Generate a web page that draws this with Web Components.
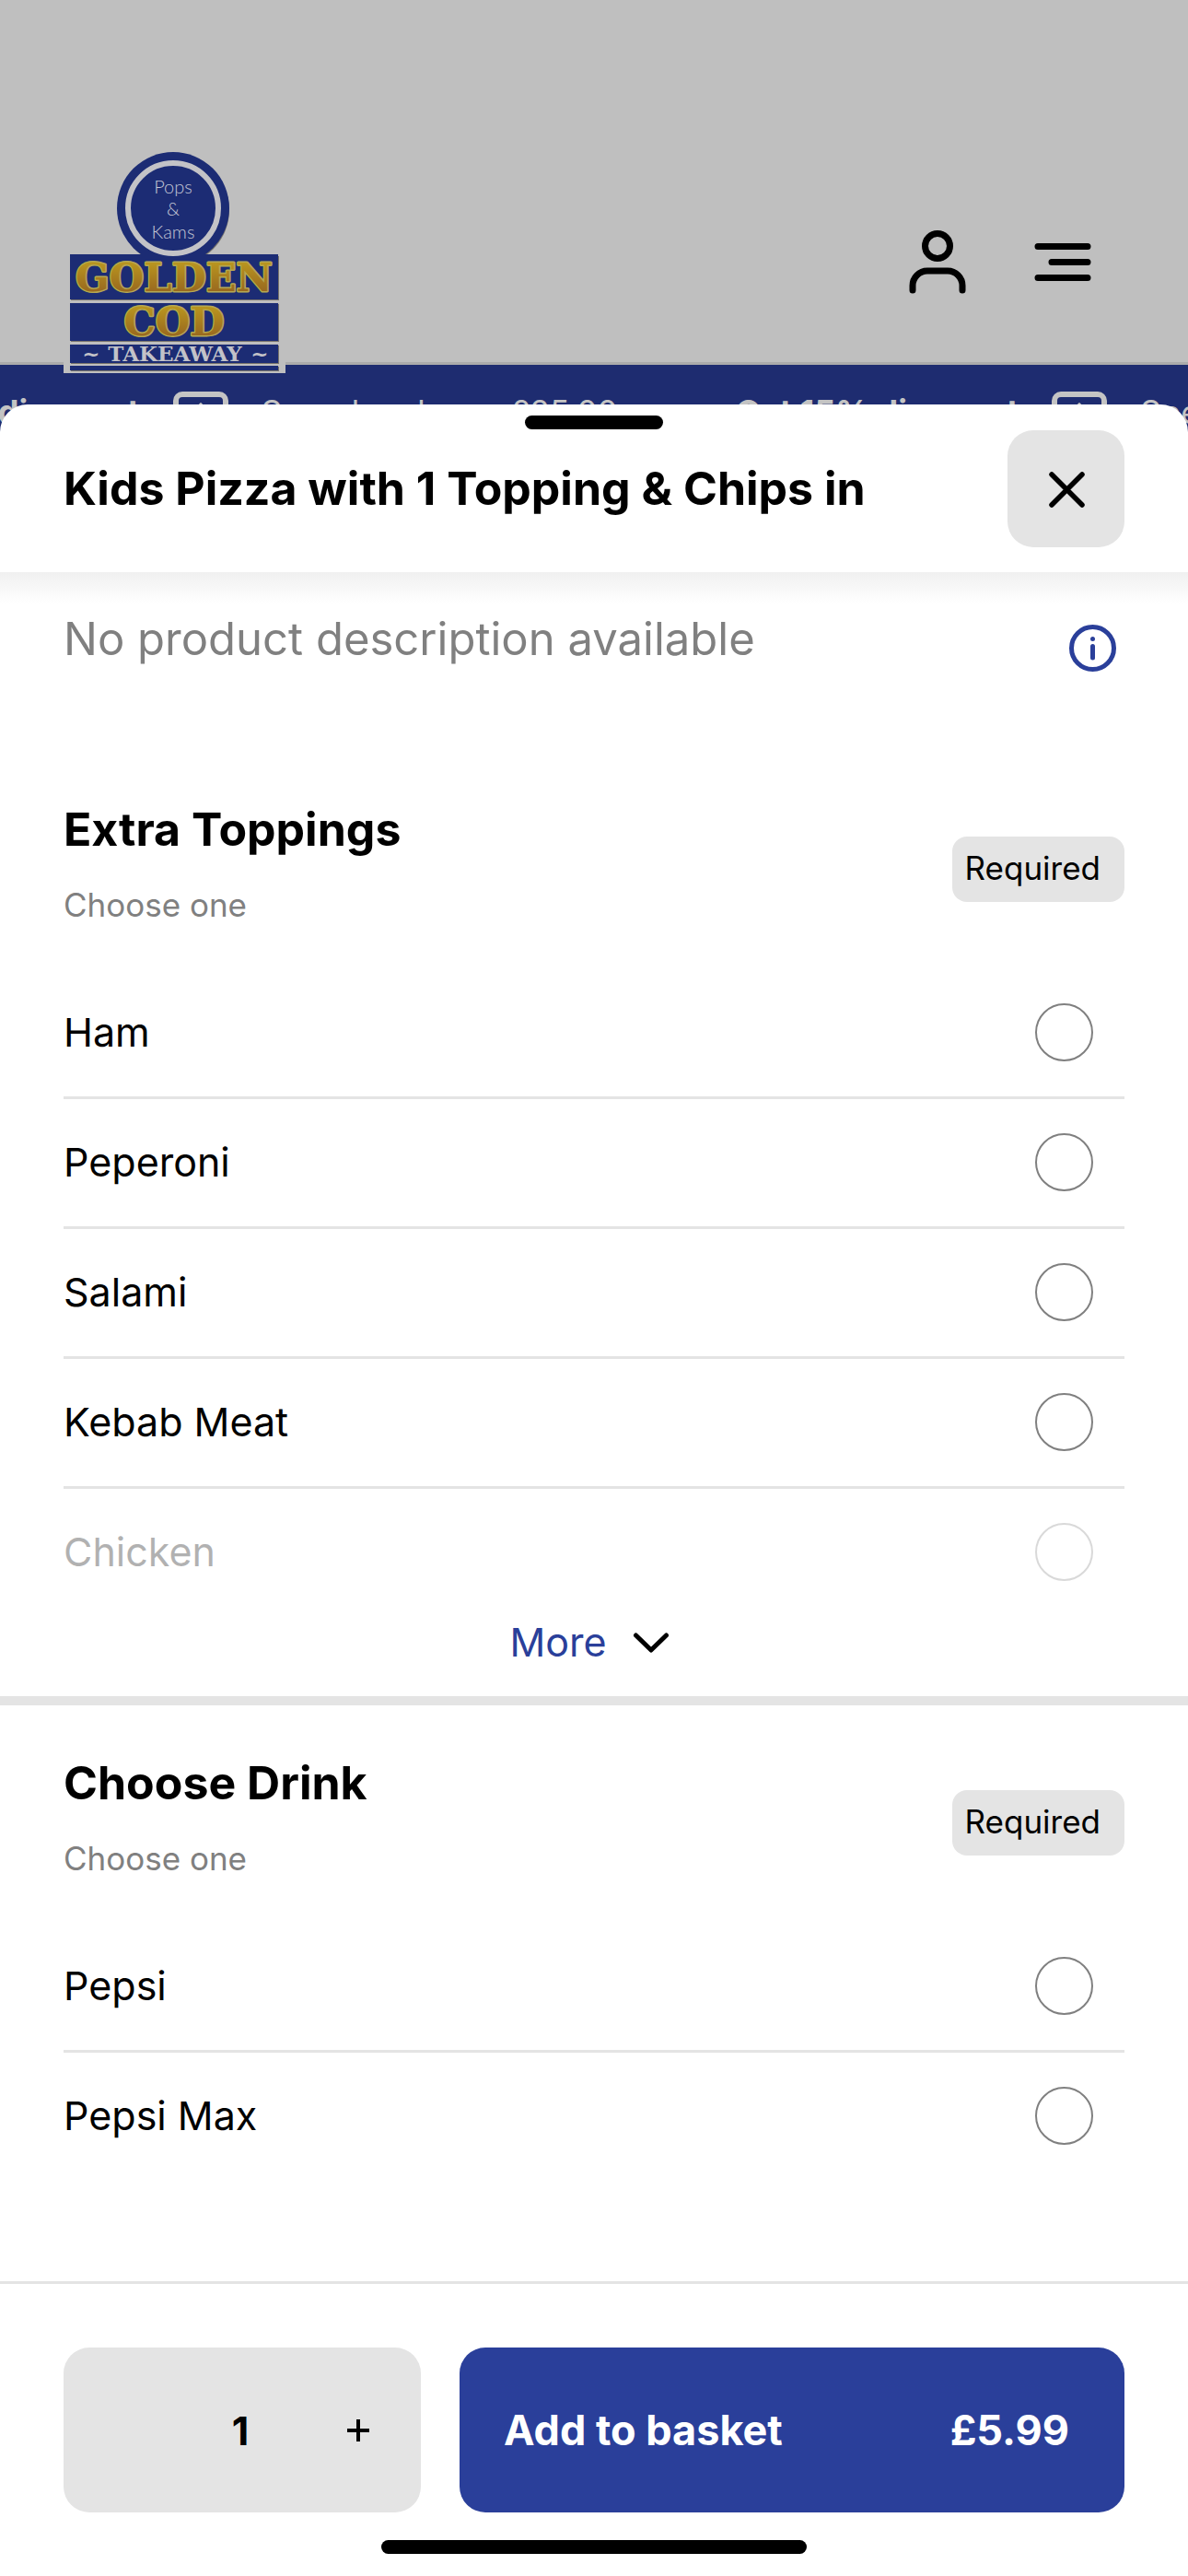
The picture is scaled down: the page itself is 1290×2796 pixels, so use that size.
<!DOCTYPE html>
<html lang="en">
<head>
<meta charset="utf-8">
<meta name="viewport" content="width=device-width, initial-scale=1">
<title>Golden Cod Takeaway</title>
<style>
    :root {
        --brand: #2a3f9a;
        --brand-dim: #1e2c70;
        --dim: #bfbfbf;
        --grey: #e4e4e4;
        --muted: #808080;
        --gutter: 69px;
    }
    body {
        margin: 0;
        min-height: 100vh;
        display: flex;
        flex-direction: column;
        background: #fff;
        color: #000;
        font-family: Inter, "Liberation Sans", sans-serif;
        font-size: 43px;
        line-height: 56px;
    }
    product-sheet {
        flex: 1;
    }
</style>
</head>
<body>
    <site-header></site-header>
    <promo-banner></promo-banner>
    <product-sheet heading="Kids Pizza with 1 Topping &amp; Chips in">
        <product-description>No product description available</product-description>
        <option-group name="toppings" heading="Extra Toppings" hint="Choose one" options="Ham,Peperoni,Salami,Kebab Meat,Chicken" more></option-group>
        <option-group name="drink" heading="Choose Drink" hint="Choose one" options="Pepsi,Pepsi Max"></option-group>
        <basket-bar slot="footer" price="£5.99"></basket-bar>
    </product-sheet>

<script>
    // Shop logo, drawn in its dimmed colours
    class ShopLogo extends HTMLElement {
        constructor() {
            super();
            this.attachShadow({ mode: 'open' });
            this.shadowRoot.innerHTML = `
                <style>
                    :host { display: block; }
                    svg { display: block; }
                    .gold {
                        font: bold 43px "DejaVu Serif", serif;
                        fill: url(#gold);
                        stroke: #b5a850;
                        stroke-width: 3px;
                        stroke-linejoin: round;
                        paint-order: stroke;
                    }
                    .thin { font: 300 20px Lato, sans-serif; fill: #c4c6d4; }
                    .small { font: bold 23px "DejaVu Serif", serif; fill: #c2c2c8; }
                </style>
                <svg width="241" height="243" viewBox="0 0 241 243" role="img" aria-label="Pops and Kams Golden Cod Takeaway">
                    <defs>
                        <linearGradient id="gold" x1="0" y1="0" x2="0" y2="1">
                            <stop offset="0.2" stop-color="#b8941f"/>
                            <stop offset="0.9" stop-color="#94621f"/>
                        </linearGradient>
                    </defs>
                    <path fill="#bfbfbf" d="M0 112h241v131H0z"/>
                    <circle cx="120" cy="66" r="60" fill="#77736c"/>
                    <circle cx="119" cy="64" r="61" fill="#1c2c74"/>
                    <g fill="#77736c">
                        <path d="M8 116h226v48H8z"/>
                        <path d="M8 168h226v41H8z"/>
                        <path d="M8 213h226v20H8z"/>
                        <path d="M8 236h226v5H8z"/>
                    </g>
                    <g fill="#1c2c74">
                        <path d="M7 114h226v49H7z"/>
                        <path d="M7 167h226v41H7z"/>
                        <path d="M7 212h226v20H7z"/>
                        <path d="M7 235h226v5H7z"/>
                    </g>
                    <circle cx="119" cy="64" r="49" fill="none" stroke="#c3c3c7" stroke-width="6"/>
                    <g text-anchor="middle">
                        <text class="thin" x="119" y="48">Pops</text>
                        <text class="thin" x="119" y="72">&amp;</text>
                        <text class="thin" x="119" y="97">Kams</text>
                        <text class="gold" x="120" y="154">GOLDEN</text>
                        <text class="gold" x="120" y="202">COD</text>
                        <text class="small" x="30" y="230">~</text>
                        <text class="small" x="121" y="230">TAKEAWAY</text>
                        <text class="small" x="213" y="230">~</text>
                    </g>
                </svg>
            `;
        }
    }
    customElements.define('shop-logo', ShopLogo);

    class SiteHeader extends HTMLElement {
        constructor() {
            super();
            this.attachShadow({ mode: 'open' });
            this.shadowRoot.innerHTML = `
                <style>
                    :host {
                        display: block;
                        background: var(--dim);
                        border-bottom: 3px solid #ababab;
                    }
                    header {
                        display: flex;
                        align-items: flex-start;
                        justify-content: space-between;
                        padding: 162px 105px 0 var(--gutter);
                    }
                    /* the logo hangs over the banner below */
                    shop-logo { margin-bottom: -12px; position: relative; z-index: 1; }
                    nav { display: flex; gap: 38px; padding-top: 80px; }
                    button { border: 0; padding: 0; background: none; }
                    svg { display: block; fill: none; stroke: #000; stroke-width: 7; stroke-linecap: round; }
                </style>
                <header>
                    <shop-logo></shop-logo>
                    <nav>
                        <button aria-label="Account">
                            <svg width="86" height="86" viewBox="0 0 86 86">
                                <circle cx="43" cy="25" r="13.5"/>
                                <path d="M16 73v-5a16 16 0 0 1 16-16h22a16 16 0 0 1 16 16v5"/>
                            </svg>
                        </button>
                        <button aria-label="Menu">
                            <svg width="86" height="86" viewBox="0 0 86 86">
                                <path d="M28 25.500h54M43 42.500h39M28 59.500h54"/>
                            </svg>
                        </button>
                    </nav>
                </header>
            `;
        }
    }
    customElements.define('site-header', SiteHeader);

    class PromoBanner extends HTMLElement {
        constructor() {
            super();
            const item = `
                <b>Get 15% discount</b>
                <svg width="60" height="60" viewBox="0 0 60 60">
                    <rect x="3" y="3" width="54" height="54" rx="7"/>
                    <path d="M18 28l12-12 12 12M30 18v26"/>
                </svg>
                <span>Spend and over £25.00</span>
            `;
            this.attachShadow({ mode: 'open' });
            this.shadowRoot.innerHTML = `
                <style>
                    :host {
                        display: flex;
                        height: 73px;
                        overflow: hidden;
                        background: var(--brand-dim);
                        color: #c4c4c4;
                        font-size: 35px;
                        line-height: 44px;
                    }
                    /* scrolling strip, part of the first item has already left the screen */
                    .track { display: flex; flex: none; gap: 128px; margin-left: -156px; padding-top: 29px; }
                    .item { display: flex; flex: none; gap: 36px; }
                    b { font-size: 36px; font-weight: 700; }
                    svg { display: block; fill: none; stroke: #c4c4c4; stroke-width: 6; stroke-linecap: round; }
                </style>
                <div class="track">
                    <div class="item">${item}</div>
                    <div class="item">${item}</div>
                </div>
            `;
        }
    }
    customElements.define('promo-banner', PromoBanner);

    class ProductSheet extends HTMLElement {
        constructor() {
            super();
            const heading = this.getAttribute('heading') || '';

            this.attachShadow({ mode: 'open' });
            this.shadowRoot.innerHTML = `
                <style>
                    :host {
                        display: flex;
                        flex-direction: column;
                        position: relative;
                        margin-top: -30px;
                        border-radius: 30px 30px 0 0;
                        background: #fff;
                    }
                    header { padding-top: 12px; padding-bottom: 27px; }
                    .handle {
                        width: 150px;
                        height: 15px;
                        margin: 0 auto 1px;
                        border-radius: 8px;
                        background: #000;
                    }
                    .bar {
                        display: flex;
                        align-items: center;
                        justify-content: space-between;
                        padding: 0 var(--gutter);
                    }
                    h1 { margin: 0; padding-bottom: 2px; font-size: 50px; line-height: 60px; font-weight: 700; }
                    button {
                        flex: none;
                        display: grid;
                        place-items: center;
                        width: 127px;
                        height: 127px;
                        border: 0;
                        padding: 0;
                        border-radius: 28px;
                        background: var(--grey);
                    }
                    main {
                        flex: 1;
                        background: linear-gradient(#f0f0f0, #fff) no-repeat 0 0 / 100% 34px;
                    }
                </style>
                <header>
                    <div class="handle"></div>
                    <div class="bar">
                        <h1>${heading.replace('&', '&amp;')}</h1>
                        <button aria-label="Close">
                            <svg width="42" height="42" viewBox="0 0 42 42" fill="none" stroke="#000" stroke-width="5.500" stroke-linecap="round">
                                <path d="M5 5l33 33M38 5L5 38"/>
                            </svg>
                        </button>
                    </div>
                </header>
                <main><slot></slot></main>
                <slot name="footer"></slot>
            `;
        }
    }
    customElements.define('product-sheet', ProductSheet);

    class ProductDescription extends HTMLElement {
        constructor() {
            super();
            this.attachShadow({ mode: 'open' });
            this.shadowRoot.innerHTML = `
                <style>
                    :host {
                        display: flex;
                        align-items: flex-start;
                        justify-content: space-between;
                        padding: 43px var(--gutter) 73px;
                    }
                    p { margin: 0; color: var(--muted); font-size: 49px; line-height: 60px; }
                    button { border: 0; padding: 14px 9px; background: none; color: var(--brand); }
                    svg { display: block; }
                </style>
                <p><slot></slot></p>
                <button aria-label="Product information">
                    <svg width="51" height="51" viewBox="0 0 51 51" fill="none" stroke="currentColor" stroke-width="5" stroke-linecap="round">
                        <circle cx="25.500" cy="25.500" r="23"/>
                        <path d="M25.500 23.500v12.500"/>
                        <circle cx="25.500" cy="15.500" r="2.500" fill="currentColor" stroke="none"/>
                    </svg>
                </button>
            `;
        }
    }
    customElements.define('product-description', ProductDescription);

    // One set of radio choices; with "more" the last one is faded out
    class OptionGroup extends HTMLElement {
        constructor() {
            super();
            const name = this.getAttribute('name');
            const heading = this.getAttribute('heading') || '';
            const hint = this.getAttribute('hint') || '';
            const options = (this.getAttribute('options') || '').split(',');

            const rows = options.map((option, i) => `
                <li>
                    <label for="${name}-${i}">${option}</label>
                    <input type="radio" id="${name}-${i}" name="${name}">
                </li>
            `).join('');

            const more = `
                <button class="more">
                    More
                    <svg width="40" height="24" viewBox="0 0 40 24" fill="none" stroke="#000" stroke-width="5" stroke-linecap="round" stroke-linejoin="round">
                        <path d="M3.500 5L20 21 36.500 5"/>
                    </svg>
                </button>
            `;

            this.attachShadow({ mode: 'open' });
            this.shadowRoot.innerHTML = `
                <style>
                    :host { display: block; padding-top: 54px; }
                    :host([more]) { border-bottom: 10px solid var(--grey); padding-bottom: 31px; }
                    .head {
                        display: flex;
                        align-items: center;
                        justify-content: space-between;
                        padding: 0 var(--gutter);
                    }
                    h2 { margin: 0; font-size: 50px; line-height: 60px; font-weight: 700; }
                    p { margin: 30px 0 13px; color: var(--muted); font-size: 35px; line-height: 44px; }
                    .badge {
                        padding: 12px 26px 15px 14px;
                        border-radius: 16px;
                        background: var(--grey);
                        font-size: 35px;
                        line-height: 44px;
                    }
                    ul { list-style: none; margin: 35px var(--gutter) 0; padding: 0; }
                    li {
                        display: flex;
                        align-items: center;
                        height: 136px;
                        padding: 0 34px 2px 0;
                        border-bottom: 3px solid var(--grey);
                    }
                    li:last-child { border-bottom: 0; }
                    :host([more]) li:last-child { opacity: 0.3; }
                    label { flex: 1; }
                    input {
                        appearance: none;
                        width: 63px;
                        height: 63px;
                        margin: 0;
                        border: 2px solid #808080;
                        border-radius: 50%;
                    }
                    input:checked { border: 18px solid var(--brand); }
                    .more {
                        display: flex;
                        align-items: center;
                        gap: 28px;
                        margin: 0 auto;
                        padding: 0 10px 0 0;
                        border: 0;
                        background: none;
                        color: var(--brand);
                        font: inherit;
                    }
                </style>
                <div class="head">
                    <div>
                        <h2>${heading}</h2>
                        <p>${hint}</p>
                    </div>
                    <span class="badge">Required</span>
                </div>
                <ul role="radiogroup" aria-label="${heading}">${rows}</ul>
                ${this.hasAttribute('more') ? more : ''}
            `;
        }
    }
    customElements.define('option-group', OptionGroup);

    class BasketBar extends HTMLElement {
        constructor() {
            super();
            const price = this.getAttribute('price') || '';

            this.attachShadow({ mode: 'open' });
            this.shadowRoot.innerHTML = `
                <style>
                    :host { display: block; border-top: 3px solid var(--grey); }
                    .actions { display: flex; gap: 42px; padding: 69px var(--gutter) 30px; }
                    button { border: 0; padding: 0; background: none; color: inherit; font: inherit; }
                    .quantity {
                        display: grid;
                        grid-template-columns: repeat(3, 1fr);
                        align-items: center;
                        justify-items: center;
                        box-sizing: border-box;
                        width: 388px;
                        height: 179px;
                        padding-right: 4px;
                        border-radius: 28px;
                        background: var(--grey);
                    }
                    output { font-weight: 700; }
                    svg { display: block; }
                    .add {
                        flex: 1;
                        display: flex;
                        align-items: center;
                        justify-content: space-between;
                        padding: 0 60px 0 48px;
                        border-radius: 28px;
                        background: var(--brand);
                        color: #fff;
                        font-size: 45px;
                        font-weight: 700;
                    }
                    .home { width: 462px; height: 15px; margin: 0 auto 24px; border-radius: 8px; background: #000; }
                </style>
                <div class="actions">
                    <div class="quantity">
                        <button aria-label="Remove one" disabled></button>
                        <output>1</output>
                        <button aria-label="Add one">
                            <svg width="24" height="24" viewBox="0 0 24 24" stroke="#000" stroke-width="4"><path d="M0 12h24M12 0v24"/></svg>
                        </button>
                    </div>
                    <button class="add"><span>Add to basket</span><span>${price}</span></button>
                </div>
                <div class="home"></div>
            `;
        }
    }
    customElements.define('basket-bar', BasketBar);
</script>
</body>
</html>
